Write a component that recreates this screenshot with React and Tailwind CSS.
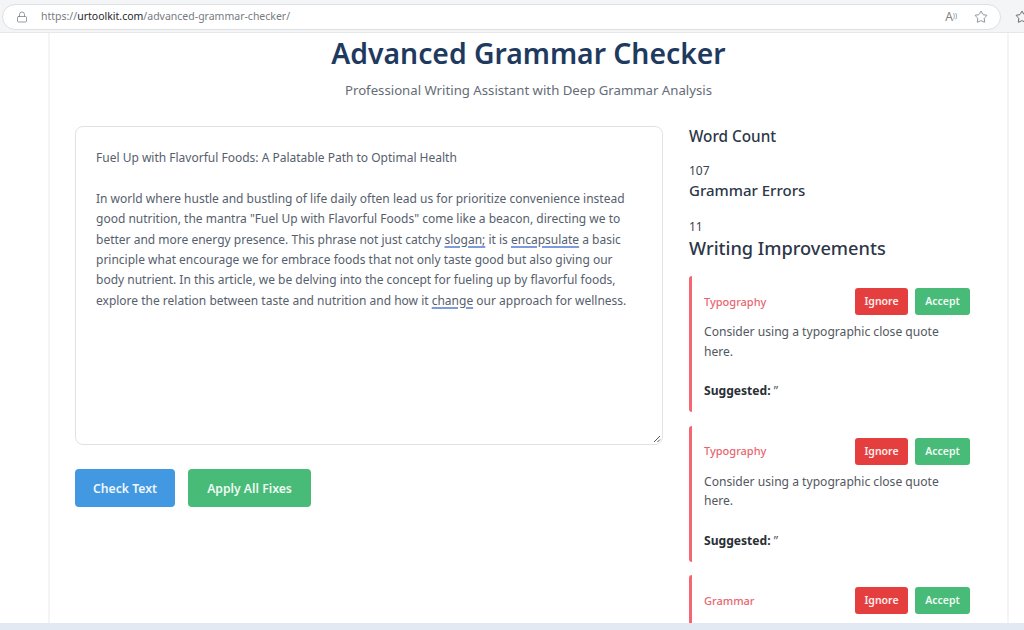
import React from 'react'
import { Lock, Star } from 'lucide-react'

const font = "font-['Segoe_UI','Noto_Sans','Open_Sans',sans-serif]"

const cards = [
  { type: 'Typography', message: 'Consider using a typographic close quote here.', suggested: '”' },
  { type: 'Typography', message: 'Consider using a typographic close quote here.', suggested: '”' },
  { type: 'Grammar' },
]

const Squiggle = ({ children }) => (
  <span className="underline decoration-[#7f9bdf] decoration-2 underline-offset-2">{children}</span>
)

const ImprovementCard = ({ card }) => (
  <div className="mb-[13.5px] h-[136px] shrink-0 rounded-[3px] border-l-[3px] border-[#f56572] pl-3 pr-[37px] pt-3">
    <div className="flex h-[27px] items-center justify-between">
      <span className="pt-[1px] text-[11px] font-medium text-[#e8656f]">{card.type}</span>
      <div className="flex gap-[7px]">
        <button className="h-[27px] w-[53px] rounded-[3px] bg-[#e53e3e] pt-[1px] text-[10.5px] font-semibold text-[#fdeeee]">Ignore</button>
        <button className="h-[27px] w-[55px] rounded-[3px] bg-[#48bb78] pt-[1px] text-[10.5px] font-semibold text-[#eefaf3]">Accept</button>
      </div>
    </div>
    {card.message && (
      <>
        <p className="mt-[7px] pr-4 text-[12.1px] leading-[19.5px] text-[#525860]">{card.message}</p>
        <p className="mt-[20px] text-[12.1px] leading-[19px] text-[#525860]">
          <strong className="font-bold text-[#2a2f36]">Suggested:</strong> {card.suggested}
        </p>
      </>
    )}
  </div>
)

export default function App() {
  return (
    <div className={`${font} flex h-[630px] w-[1024px] flex-col overflow-hidden bg-white`}>
      {/* Browser address bar */}
      <div className="flex h-[33px] shrink-0 items-start border-b border-[#e6e7e9] bg-[#f4f5f6] pt-[4px] pl-[2px]">
        <div className="flex h-[26px] w-[999px] shrink-0 items-center justify-between rounded-full border border-[#dedfe1] bg-white pl-[13px] pr-[12px]">
          <div className="flex items-center gap-[13px] text-[10.5px] text-[#777b80]">
            <Lock size={12} strokeWidth={1.5} />
            <span>https://<span className="text-[#26282b]">urtoolkit.com</span>/advanced-grammar-checker/</span>
          </div>
          <div className="flex items-center gap-[17px] text-[#808387]">
            <span className="text-[12px] leading-none">A<sup className="text-[7px]">))</sup></span>
            <Star size={14} strokeWidth={1.5} />
          </div>
        </div>
        <Star size={14} strokeWidth={1.5} className="ml-[14px] mt-[6px] shrink-0 text-[#555]" />
      </div>

      <div className="flex min-h-0 flex-1">
        <div className="w-[48px] shrink-0" />
        {/* Page container */}
        <div className="flex w-[961px] shrink-0 flex-col overflow-hidden border-x-2 border-[#f4f4f5] bg-white">
          <header className="text-center">
            <h1 className="text-[28.3px] font-semibold leading-[40px] text-[#1f3a5f]">Advanced Grammar Checker</h1>
            <p className="mt-[7px] text-[13.2px] leading-[20px] text-[#646c77]">Professional Writing Assistant with Deep Grammar Analysis</p>
          </header>

          <div className="mt-[26px] flex gap-[26px] pl-[25px]">
            {/* Editor column */}
            <div className="w-[588px] shrink-0">
              <div className="relative h-[319px] rounded-[8px] border border-[#dfe2e6] px-5 pt-[21px] text-[12px] leading-[20.4px] text-[#56606d]">
                <p>Fuel Up with Flavorful Foods: A Palatable Path to Optimal Health</p>
                <p className="mt-[20.4px]">
                  In world where hustle and bustling of life daily often lead us for prioritize convenience instead good nutrition, the mantra "Fuel Up with Flavorful Foods" come like a beacon, directing we to better and more energy presence. This phrase not just catchy <Squiggle>slogan;</Squiggle> it is <Squiggle>encapsulate</Squiggle> a basic principle what encourage we for embrace foods that not only taste good but also giving our body nutrient. In this article, we be delving into the concept for fueling up by flavorful foods, explore the relation between taste and nutrition and how it <Squiggle>change</Squiggle> our approach for wellness.
                </p>
                <svg className="absolute bottom-[1px] right-[1px] text-[#555]" width="8" height="8" viewBox="0 0 8 8" fill="none" stroke="currentColor">
                  <path d="M1 7 7 1M4.5 7 7 4.5" />
                </svg>
              </div>
              <div className="mt-6 flex gap-[13px]">
                <button className="h-[38px] w-[100px] rounded-[4px] bg-[#4299e1] pt-[3px] text-[12.2px] font-semibold text-[#eef6fd]">Check Text</button>
                <button className="h-[38px] w-[123px] rounded-[4px] bg-[#48bb78] pt-[3px] text-[12.2px] font-semibold text-[#eefaf3]">Apply All Fixes</button>
              </div>
            </div>

            {/* Sidebar */}
            <aside className="flex-1 text-[#2d3748]">
              <h3 className="text-[15.3px] font-medium leading-[20px]">Word Count</h3>
              <p className="mt-[16px] text-[12px] leading-[18px] text-[#3b4350]">107</p>
              <h3 className="text-[15px] font-medium leading-[20px]">Grammar Errors</h3>
              <p className="mt-[18px] text-[12px] leading-[18px] text-[#3b4350]">11</p>
              <h2 className="mb-[16px] text-[18.2px] font-medium leading-[24px]">Writing Improvements</h2>
              {cards.map((card, i) => (
                <ImprovementCard key={i} card={card} />
              ))}
            </aside>
          </div>
        </div>
      </div>

      {/* Taskbar sliver */}
      <div className="h-[7px] shrink-0 bg-[#e3e9f3]" />
    </div>
  )
}
